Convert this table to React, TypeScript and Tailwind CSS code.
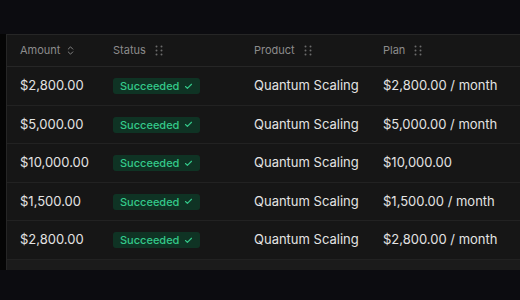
import { ChevronsUpDown, Check } from 'lucide-react'

type Payment = {
  amount: string
  plan: string
}

const payments: Payment[] = [
  { amount: '$2,800.00', plan: '$2,800.00 / month' },
  { amount: '$5,000.00', plan: '$5,000.00 / month' },
  { amount: '$10,000.00', plan: '$10,000.00' },
  { amount: '$1,500.00', plan: '$1,500.00 / month' },
  { amount: '$2,800.00', plan: '$2,800.00 / month' },
]

const cols = 'grid grid-cols-[93px_141px_129px_1fr]'

const Grip = () => (
  <svg width="8" height="11" viewBox="0 0 8 11" className="text-[#6b6b6b]">
    <circle cx="1.5" cy="1.5" r="1" fill="currentColor" />
    <circle cx="6.5" cy="1.5" r="1" fill="currentColor" />
    <circle cx="1.5" cy="5.5" r="1" fill="currentColor" />
    <circle cx="6.5" cy="5.5" r="1" fill="currentColor" />
    <circle cx="1.5" cy="9.5" r="1" fill="currentColor" />
    <circle cx="6.5" cy="9.5" r="1" fill="currentColor" />
  </svg>
)

export default function App() {
  return (
    <main
      className="h-[300px] w-[520px] overflow-hidden bg-[#0c0c10] pt-[34px]"
      style={{ fontFamily: 'Inter, "Noto Sans", sans-serif' }}
    >
      <div className="flex h-[236px]">
        <div className="w-[6px] bg-[#050505]" />
        <div className="flex flex-1 flex-col border-l border-t border-[#262626] bg-[#161616]">
          <div className={`${cols} h-[32px] items-center border-b border-[#262626] text-[11px] text-[#8c8c8c]`}>
            <div className="flex items-center gap-[5px] pl-[13px]">
              Amount
              <ChevronsUpDown size={11} strokeWidth={2} className="text-[#8c8c8c]" />
            </div>
            <div className="flex items-center gap-[9px] pl-[13px]">
              Status
              <Grip />
            </div>
            <div className="flex items-center gap-[9px] pl-[13px]">
              Product
              <Grip />
            </div>
            <div className="flex items-center gap-[9px] pl-[13px]">
              Plan
              <Grip />
            </div>
          </div>

          {payments.map((p, i) => (
            <div
              key={i}
              className={`${cols} h-[38.5px] items-center border-b border-[#222222] text-[13px] text-[#e3e3e3]`}
            >
              <div className="pl-[13px]">{p.amount}</div>
              <div className="pl-[13px]">
                <span className="inline-flex h-[16px] items-center gap-[5px] rounded-[3px] bg-[#0f3324] px-[7px] text-[11px] font-medium text-[#34c98a]">
                  Succeeded
                  <Check size={9} strokeWidth={3} />
                </span>
              </div>
              <div className="pl-[13px]">Quantum Scaling</div>
              <div className="pl-[13px]">{p.plan}</div>
            </div>
          ))}

          <div className="flex-1 bg-[#1b1b1b]" />
        </div>
      </div>
    </main>
  )
}
